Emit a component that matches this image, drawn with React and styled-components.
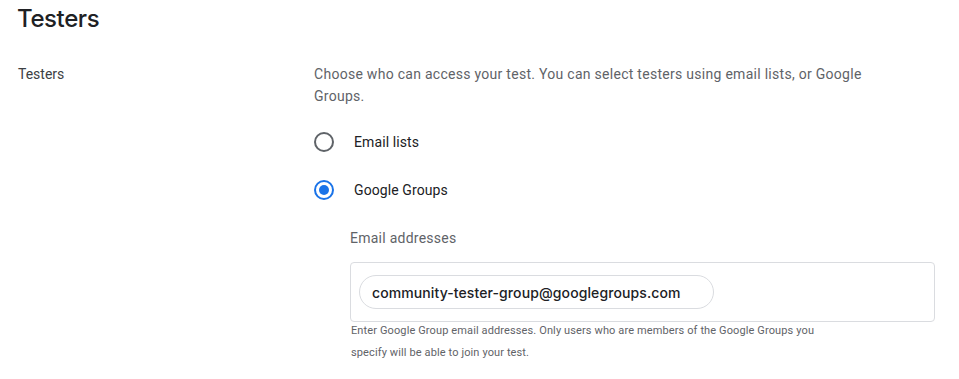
import React from "react";
import styled, { createGlobalStyle } from "styled-components";

const Global = createGlobalStyle`
  html, body { margin: 0; padding: 0; background: #fff; }
  body { font-family: Roboto, "Noto Sans", Arial, sans-serif; color: #202124; }
`;

const Page = styled.div`
  padding: 4px 18px 0 18px;
  width: 959px;
  box-sizing: border-box;
`;

const Title = styled.h1`
  margin: 0 0 0 -1px;
  font-family: Inter, "Open Sans", sans-serif;
  font-weight: 500;
  font-size: 24px;
  line-height: 30px;
  color: #202124;
  letter-spacing: -0.4px;
`;

const Row = styled.div`
  display: grid;
  grid-template-columns: 296px 1fr;
  margin-top: 29px;
`;

const Label = styled.div`
  font-size: 14px;
  line-height: 22px;
  color: #3c4043;
`;

const Content = styled.div`
  display: flex;
  flex-direction: column;
  width: 585px;
`;

const Description = styled.p`
  margin: 0;
  font-size: 14px;
  line-height: 22px;
  color: #5f6368;
  letter-spacing: 0.28px;
  width: 570px;
`;

const RadioGroup = styled.div`
  display: flex;
  flex-direction: column;
  gap: 28px;
  margin-top: 25px;
`;

const RadioRow = styled.label`
  display: flex;
  align-items: center;
  gap: 20px;
  height: 20px;
  font-size: 14px;
  color: #202124;
  letter-spacing: 0.1px;
`;

const RadioCircle = styled.span`
  box-sizing: border-box;
  width: 20px;
  height: 20px;
  border-radius: 50%;
  border: 2px solid ${(p) => (p.$checked ? "#1a73e8" : "#5f6368")};
  display: flex;
  align-items: center;
  justify-content: center;
  &::after {
    content: "";
    width: 10px;
    height: 10px;
    border-radius: 50%;
    background: #1a73e8;
    display: ${(p) => (p.$checked ? "block" : "none")};
  }
`;

const Field = styled.div`
  margin-left: 36px;
  margin-top: 28px;
  display: flex;
  flex-direction: column;
`;

const FieldLabel = styled.div`
  font-size: 14px;
  line-height: 20px;
  color: #5f6368;
  letter-spacing: 0.25px;
`;

const InputBox = styled.div`
  margin-top: 14px;
  box-sizing: border-box;
  width: 585px;
  height: 60px;
  border: 1px solid #dadce0;
  border-radius: 4px;
  padding: 12px 8px;
  display: flex;
  align-items: flex-start;
`;

const Chip = styled.span`
  box-sizing: border-box;
  height: 34px;
  width: 355px;
  border: 1px solid #dadce0;
  border-radius: 17px;
  padding: 0 12px;
  display: flex;
  align-items: center;
  font-family: Inter, "Open Sans", sans-serif;
  font-size: 14px;
  font-weight: 500;
  color: #202124;
  letter-spacing: 0.1px;
`;

const Helper = styled.p`
  margin: -2px 0 0 1px;
  font-size: 11px;
  line-height: 22px;
  color: #5f6368;
  letter-spacing: 0.12px;
  width: 480px;
`;

export default function App() {
  return (
    <>
      <Global />
      <Page>
        <Title>Testers</Title>
        <Row>
          <Label>Testers</Label>
          <Content>
            <Description>
              Choose who can access your test. You can select testers using email lists, or Google Groups.
            </Description>
            <RadioGroup>
              <RadioRow>
                <RadioCircle />
                Email lists
              </RadioRow>
              <RadioRow>
                <RadioCircle $checked />
                Google Groups
              </RadioRow>
            </RadioGroup>
            <Field>
              <FieldLabel>Email addresses</FieldLabel>
              <InputBox>
                <Chip>community-tester-group@googlegroups.com</Chip>
              </InputBox>
              <Helper>
                Enter Google Group email addresses. Only users who are members of the Google Groups you specify will be able to join your test.
              </Helper>
            </Field>
          </Content>
        </Row>
      </Page>
    </>
  );
}
